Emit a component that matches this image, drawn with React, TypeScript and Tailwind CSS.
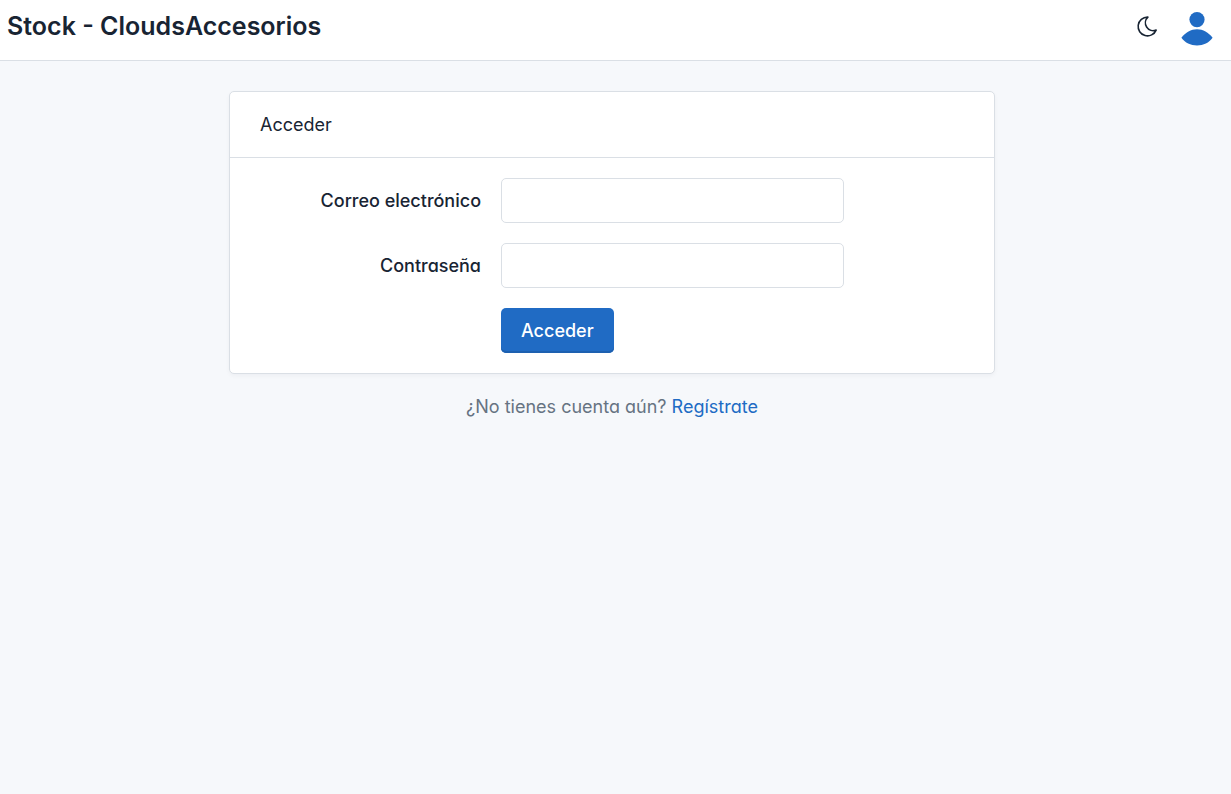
import React from "react";

function MoonIcon() {
  return (
    <svg
      width="25"
      height="25"
      viewBox="0 0 24 24"
      fill="none"
      stroke="currentColor"
      strokeWidth="1.5"
      strokeLinecap="round"
      strokeLinejoin="round"
      aria-hidden="true"
    >
      <path d="M12 3c.132 0 .263 0 .393 0a7.5 7.5 0 0 0 7.92 12.446a9 9 0 1 1 -8.313 -12.454z" />
    </svg>
  );
}

function UserIcon() {
  return (
    <svg width="32" height="34" viewBox="0 0 32 34" fill="#206bc4" aria-hidden="true">
      <circle cx="16" cy="7.6" r="7.6" />
      <path d="M0.4 25.8C4.5 20.4 10 17.3 16 17.3S27.5 20.4 31.6 25.8C28 30.8 22.4 33.5 16 33.5S4 30.8 0.4 25.8Z" />
    </svg>
  );
}

function Header() {
  return (
    <header className="flex h-[61px] items-start justify-between border-b border-[#dadfe5] bg-white pr-[18px] pl-[7px]">
      <h1 className="pt-3 text-[25px] leading-7 font-semibold">
        <a href="#inicio">Stock - CloudsAccesorios</a>
      </h1>
      <div className="flex items-start gap-[21px] pt-3">
        <button type="button" aria-label="Activar modo oscuro" className="block h-7">
          <MoonIcon />
        </button>
        <button type="button" aria-label="Cuenta" className="block">
          <UserIcon />
        </button>
      </div>
    </header>
  );
}

function Field({ id, label, type }: { id: string; label: string; type: string }) {
  return (
    <>
      <label htmlFor={id} className="col-span-4 self-center text-right font-medium">
        {label}
      </label>
      <input
        id={id}
        type={type}
        className="col-span-6 h-[45px] w-full rounded-[5px] border border-[#dadfe5] bg-white px-4 outline-none focus:border-[#90b5e2]"
      />
      <div className="col-span-2" />
    </>
  );
}

export default function App() {
  return (
    <div className="min-h-screen bg-[#f6f8fb] font-['Inter',sans-serif] text-[18px] leading-[25px] text-[#182433] [font-feature-settings:'cv03','cv04','cv11']">
      <Header />
      <main className="flex flex-col items-center pt-[30px] pr-[7px]">
        <section className="w-full max-w-[766px] rounded-[5px] border border-[#dadfe5] bg-white shadow-[0_2px_4px_rgba(24,36,51,0.04)]">
          <h2 className="border-b border-[#dadfe5] px-[30px] py-5">Acceder</h2>
          <form className="grid grid-cols-12 gap-5 px-[29px] py-5" onSubmit={(e) => e.preventDefault()}>
            <Field id="email" label="Correo electrónico" type="email" />
            <Field id="password" label="Contraseña" type="password" />
            <button
              type="submit"
              className="col-span-6 col-start-5 h-[45px] justify-self-start rounded-[5px] bg-[#206bc4] px-5 font-medium text-white shadow-[inset_0_-2px_0_#1d60b0]"
            >
              Acceder
            </button>
          </form>
        </section>
        <p className="pt-5 text-[#667382]">
          ¿No tienes cuenta aún?{" "}
          <a href="#registro" className="text-[#206bc4]">
            Regístrate
          </a>
        </p>
      </main>
    </div>
  );
}
